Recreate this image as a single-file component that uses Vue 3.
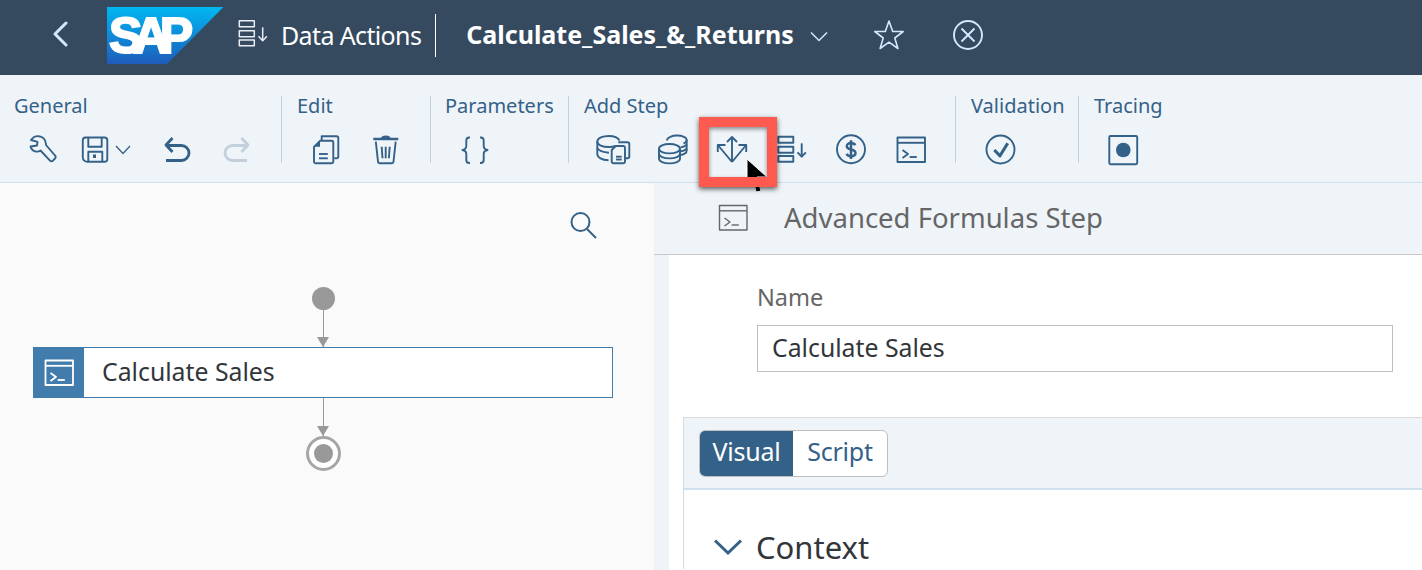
<script setup>
import { h } from 'vue'

/* '!' = heavier stroke, '#' = solid fill */
const icons = {
  wrench: ['M3 5C5 2.200 8 1 10.500 1.200C14.500 1.500 17.800 4.500 18 9L18 10L27 20.500A2 2 0 0 1 27 23.500L25 25.700A2 2 0 0 1 22 25.700L12.500 15.500C9.500 17.500 4 17 2.500 11.500L9 10.500L9.500 6.800Z'],
  save: ['M5.500 2.500H24.500A2.800 2.800 0 0 1 27.300 5.300V24A2.800 2.800 0 0 1 24.500 26.800H7.500A4.500 4.500 0 0 1 2.800 22.500V5.300A2.800 2.800 0 0 1 5.500 2.500Z', 'M8.300 2.500V11.700H21.700V2.500', 'M8.300 26.800V16.700H22.300V26.800', '#M13 19.500H16V23H13Z'],
  copy: ['M10.700 5V1.200H25.500A1.800 1.800 0 0 1 27.300 3V21.500A1.800 1.800 0 0 1 25.500 23.300H23.300', 'M9 5.800H20.500A1.800 1.800 0 0 1 22.300 7.600V26.500A1.800 1.800 0 0 1 20.500 28.300H4.800A1.800 1.800 0 0 1 3 26.500V11.800Z', '#M9 5.800V11.800H3Z', 'M8 19H16.800', 'M8 23.300H16.800'],
  trash: ['!M2.300 4H27.300', '#M10 3.200C10 1.500 12 .4 14.800 .4S19.500 1.500 19.500 3.200Z', 'M4.800 6.700L7 26.500A2 2 0 0 0 9 28.300H20.500A2 2 0 0 0 22.500 26.500L24.700 6.700', 'M10.700 11.700L11.500 23.300', 'M14.700 11.700V23.300', 'M18.700 11.700L17.900 23.300'],
  braces: ['M10 2.500H9.300C7.300 2.500 6.300 3.500 6.300 5.500V11C6.300 13 5 14.500 2.500 15C5 15.500 6.300 17 6.300 19V25C6.300 27 7.300 28 9.300 28H10', 'M20 2.500H20.700C22.700 2.500 23.700 3.500 23.700 5.500V11C23.700 13 25 14.500 27.500 15C25 15.500 23.700 17 23.700 19V25C23.700 27 22.700 28 20.700 28H20'],
  dbdoc: ['M21.500 5.500C20 2.800 15.500 1 11 1C4.800 1 -.7 3 -.7 6.500V19C-.7 22.500 4 25 10.500 25.300', 'M-.7 6.500C-.7 10 4.500 12 11 12C13.500 12 15.800 11.700 17.500 11', 'M-.7 13C0 15.500 5 17.500 11 17.700', 'M20.300 7.300H29.500A1.800 1.800 0 0 1 31.300 9.100V21.500A1.800 1.800 0 0 1 29.500 23.300H27.700', 'M17.700 11H25.200A1.800 1.800 0 0 1 27 12.800V26.500A1.800 1.800 0 0 1 25.200 28.300H15.500A1.800 1.800 0 0 1 13.700 26.500V15Z', 'M18 21.700H23.700', 'M18 24.500H23.700'],
  dbstack: ['M12.500 9C6.700 9 2 11 2 13.700S6.700 18.400 12.500 18.400 23 16.400 23 13.700 18.300 9 12.500 9Z', 'M2 13.700V23.700C2 26.400 6.700 28.400 12.500 28.400S23 26.400 23 23.700V13.700', 'M2 18.700C2 21.400 6.700 23.400 12.500 23.400S23 21.400 23 18.700', 'M9.700 5.500C10.500 2.500 15 .5 20 .5 25.500 .5 29.700 2.400 29.700 5V15.500C29.700 17.800 27 19.500 23.500 20', 'M26.500 8.500C28.300 7.800 29.700 6.500 29.700 5', 'M23.700 12.300C26.700 11.800 29 10.800 29.700 9.500', 'M23.700 16.300C26.700 15.800 29 14.800 29.700 13.500'],
  split: ['M15 2V27', 'M10 7L15 2 20 7', 'M15 27L.8 10', 'M15 27L29.200 10', 'M.8 17V10H8.500', 'M21.500 10H29.200V17'],
  rows: ['M1.300 1.700H16.300V7.700H1.300Z', 'M1.300 11.700H16.300V17.700H1.300Z', 'M1.300 21H16.300V26.700H1.300Z', 'M24.700 8.300V21.700', 'M20.500 17.300L24.700 21.700 28.900 17.300'],
  dollar: ['M15 .3A14 14 0 1 1 15 28.300 14 14 0 1 1 15 .3Z', '!M19.300 10.200C18.500 8.700 17 8 15 8C12.500 8 10.800 9.300 10.800 11.200C10.800 15.800 19.500 13.200 19.500 18C19.500 20 17.500 21.200 15 21.200C13 21.200 11.300 20.300 10.500 18.800', '!M15 5.200V24'],
  console: ['M1.500 2.500H29V27H1.500Z', 'M1.500 7.800H29', 'M6.500 15L12 19 6.500 23', 'M13.600 22H20.800'],
  check: ['M15.500 .5A14 14 0 1 1 15.500 28.500 14 14 0 1 1 15.500 .5Z', '!!M9.300 15L15 20.800 22.700 8.300'],
  record: ['M2.500 1H28A1.200 1.200 0 0 1 29.200 2.200V28A1.200 1.200 0 0 1 28 29.200H2.500A1.200 1.200 0 0 1 1.300 28V2.200A1.200 1.200 0 0 1 2.500 1Z'],
  undo: ['M10.500 3L4 10 10.500 17', 'M4 10.500H19.500A7.500 7.500 0 0 1 19.500 25.500H4'],
  redo: ['M19.500 3L26 10 19.500 17', 'M26 10.500H10.500A7.500 7.500 0 0 0 10.500 25.500H25'],
  search: ['M11.500 2A9 9 0 1 1 11.500 20 9 9 0 1 1 11.500 2Z', 'M18 18L27 27'],
  star: ['M15 1L18.700 11.500H29.200L20.800 18 23.900 28.500 15 22.200 6.100 28.500 9.200 18 .8 11.500H11.300Z'],
  xcircle: ['M15 1A14 14 0 1 1 15 29 14 14 0 1 1 15 1Z', 'M8.500 8.500L21.500 21.500', 'M21.500 8.500L8.500 21.500'],
}

const Ico = (props) => {
  const sw = Number(props.sw || 1.9)
  return h('svg', {
    width: props.size || 30,
    height: props.size || 30,
    viewBox: '0 0 30 30',
    fill: 'none',
    stroke: 'currentColor',
    'stroke-width': sw,
    'stroke-linejoin': 'round',
    style: 'display:block;flex:none;overflow:visible',
  }, [
    ...icons[props.name].map((raw) => {
      if (raw.startsWith('#')) return h('path', { d: raw.slice(1), fill: 'currentColor', stroke: 'none' })
      if (raw.startsWith('!!')) return h('path', { d: raw.slice(2), 'stroke-width': sw + 1.2 })
      if (raw.startsWith('!')) return h('path', { d: raw.slice(1), 'stroke-width': sw + 0.6 })
      return h('path', { d: raw })
    }),
    props.name === 'record' ? h('circle', { cx: 15.300, cy: 15, r: 7.300, fill: 'currentColor', stroke: 'none' }) : null,
  ])
}
Ico.props = ['name', 'size', 'sw']

const groups = [
  { id: 'general', label: 'General', tools: ['wrench', 'save', 'undo', 'redo'] },
  { id: 'edit', label: 'Edit', tools: ['copy', 'trash'] },
  { id: 'params', label: 'Parameters', tools: ['braces'] },
  { id: 'add', label: 'Add Step', tools: ['dbdoc', 'dbstack', 'split', 'rows', 'dollar', 'console'] },
  { id: 'valid', label: 'Validation', tools: ['check'] },
  { id: 'trace', label: 'Tracing', tools: ['record'] },
]
</script>

<template>
  <div class="page">
    <header class="shell">
      <svg class="back" width="16" height="26" viewBox="0 0 16 26" fill="none" stroke="currentColor" stroke-width="3" stroke-linecap="round" stroke-linejoin="round"><path d="M14 2L3 13 14 24"/></svg>
      <svg class="logo" width="117" height="57" viewBox="0 0 117 57">
        <defs>
          <linearGradient id="sapg" x1="0" y1="0" x2="0" y2="1">
            <stop offset="0" stop-color="#00b8f1"/>
            <stop offset="0.45" stop-color="#0d8fdc"/>
            <stop offset="1" stop-color="#1e5cb9"/>
          </linearGradient>
        </defs>
        <path d="M0 0H116.500L60 57H0Z" fill="url(#sapg)"/>
        <text x="2" y="45.500" font-family="'Liberation Sans',sans-serif" font-weight="700" font-size="50" fill="#fff" stroke="#fff" stroke-width="2" textLength="84" lengthAdjust="spacing">SAP</text>
      </svg>
      <Ico class="app-ico" name="rows" :sw="1.500" />
      <span class="app">Data Actions</span>
      <span class="bar"></span>
      <span class="doc">Calculate_Sales_&amp;_Returns</span>
      <svg class="caret" width="18" height="11" viewBox="0 0 18 11" fill="none" stroke="currentColor" stroke-width="1.500"><path d="M1 1.500L9 9.500 17 1.500"/></svg>
      <Ico class="star" name="star" :sw="1.600" />
      <Ico class="close" name="xcircle" :sw="1.900" />
    </header>

    <nav class="toolbar">
      <section v-for="g in groups" :key="g.id" class="group" :class="'g-' + g.id">
        <div class="label">{{ g.label }}</div>
        <div class="tools">
          <button v-for="t in g.tools" :key="t" class="tool" :class="'t-' + t">
            <Ico :name="t" :sw="t === 'undo' || t === 'redo' ? 2.800 : 1.900" />
            <svg v-if="t === 'save'" class="save-caret" width="16" height="10" viewBox="0 0 16 10" fill="none" stroke="currentColor" stroke-width="1.300"><path d="M1 1L8 8.500 15 1"/></svg>
          </button>
        </div>
      </section>
      <div class="pointer">
        <svg width="24" height="38" viewBox="0 0 24 38"><path d="M1 1V26L7 20 10 34 15 33 11 19H21Z" fill="#000" stroke="#fff" stroke-width="1"/></svg>
      </div>
      <div class="callout"></div>
    </nav>

    <main class="work">
      <aside class="canvas">
        <div class="search"><Ico name="search" :sw="2" /></div>
        <div class="flow">
          <div class="start"></div>
          <div class="wire short"></div>
          <div class="node">
            <div class="node-ico"><Ico name="console" :sw="1.800" /></div>
            <div class="node-name">Calculate Sales</div>
          </div>
          <div class="wire long"></div>
          <div class="end"><span></span></div>
        </div>
      </aside>

      <section class="panel">
        <div class="panel-head">
          <Ico class="panel-ico" name="console" :sw="1.400" />
          <h2>Advanced Formulas Step</h2>
        </div>
        <div class="panel-body">
          <div class="form">
            <label>Name</label>
            <div class="input">Calculate Sales</div>
          </div>
          <div class="card">
            <div class="card-bar">
              <div class="segment">
                <span class="seg on">Visual</span>
                <span class="seg">Script</span>
              </div>
            </div>
            <div class="context">
              <svg width="30" height="18" viewBox="0 0 30 18" fill="none" stroke="currentColor" stroke-width="3"><path d="M2 2.500L15 15 28 2.500"/></svg>
              <span>Context</span>
            </div>
          </div>
        </div>
      </section>
    </main>
  </div>
</template>

<style>
html, body { margin: 0; overflow: hidden; }
</style>

<style scoped>
.page {
  width: 1422px;
  height: 570px;
  overflow: hidden;
  font-family: "Noto Sans", "Open Sans", sans-serif;
  background: #fff;
}
.shell {
  height: 75px;
  background: #354a5f;
  color: #fff;
  display: flex;
  align-items: center;
  box-sizing: border-box;
  padding-left: 52px;
}
.back { color: #d1e8ff; margin-right: 39px; margin-top: -7px; }
.logo { margin-right: 14px; margin-top: -4px; flex: none; }
.app-ico { color: #e8eef4; margin-right: 13px; margin-top: -8px; }
.app { font-size: 25px; letter-spacing: -0.630px; margin-top: -6px; }
.bar { width: 1px; height: 43px; background: #fff; margin: -5px 30px 0 14px; }
.doc { font-size: 25px; font-weight: 700; margin-top: -8px; }
.caret { color: #d1e8ff; margin: -3px 46px 0 16px; }
.star { color: #d1e8ff; margin-top: -5px; margin-right: 49px; }
.close { color: #d1e8ff; margin-top: -5px; }

.toolbar {
  position: relative;
  height: 108px;
  box-sizing: border-box;
  background: #eff4f9;
  border-bottom: 1px solid #d1e0ee;
  display: flex;
  align-items: flex-start;
  padding-top: 21px;
}
.group {
  box-sizing: border-box;
  height: 67px;
  padding-left: 14px;
  border-right: 1px solid #c9d1d8;
  color: #346187;
  flex: none;
}
.g-general { width: 282px; }
.g-edit { width: 149px; }
.g-params { width: 138px; }
.g-add { width: 387px; }
.g-valid { width: 123px; }
.g-trace { border-right: 0; }
.label { font-size: 20px; line-height: 20px; height: 39px; padding-left: 1px; white-space: nowrap; }
.g-general .label, .g-params .label { padding-left: 0; }
.g-general .tools { margin-left: -1px; }
.tools { display: flex; }
.tool {
  width: 60px;
  height: 30px;
  padding: 0;
  border: 0;
  background: none;
  color: inherit;
  display: flex;
  align-items: center;
  justify-content: center;
  flex: none;
}
.g-add .tool { width: 59.600px; }
.t-save { width: 74px; justify-content: flex-start; padding-left: 7px; gap: 5px; }
.t-redo { color: #c3d0dc; }

.callout {
  position: absolute;
  left: 699px;
  top: 42px;
  width: 78px;
  height: 70px;
  box-sizing: border-box;
  border: 10px solid #ff5a4f;
  box-shadow: 0 2px 5px rgba(0, 0, 0, 0.65), inset 0 2px 4px rgba(0, 0, 0, 0.45);
}
.pointer { position: absolute; left: 746px; top: 83px; line-height: 0; }

.work { display: flex; height: 387px; }
.canvas {
  position: relative;
  width: 654px;
  flex: none;
  background: #fafafa;
}
.search { position: absolute; left: 569px; top: 28px; color: #346187; }
.flow {
  display: flex;
  flex-direction: column;
  align-items: center;
  width: 580px;
  margin-left: 33px;
  padding-top: 104px;
}
.start { width: 23px; height: 23px; border-radius: 50%; background: #999; }
.wire {
  position: relative;
  width: 1px;
  background: #999;
}
.wire::after {
  content: "";
  position: absolute;
  left: -6px;
  bottom: 0;
  border-left: 6.500px solid transparent;
  border-right: 6.500px solid transparent;
  border-top: 10px solid #999;
}
.wire.short { height: 37px; }
.wire.long { height: 38px; z-index: 1; }
.node {
  width: 580px;
  height: 51px;
  box-sizing: border-box;
  display: flex;
  background: #fff;
  border: 1px solid #427cac;
}
.node-ico {
  width: 51px;
  margin: -1px 0 -1px -1px;
  background: #427cac;
  color: #fff;
  display: flex;
  align-items: center;
  justify-content: center;
}
.node-name { margin-left: 18px; font-size: 24.800px; line-height: 47px; color: #32363a; }
.end {
  width: 35px;
  height: 35px;
  box-sizing: border-box;
  border: 3px solid #a6a6a6;
  border-radius: 50%;
  display: flex;
  align-items: center;
  justify-content: center;
  background: #fff;
}
.end span { width: 19px; height: 19px; background: #999; border-radius: 50%; }

.panel { flex: 1; background: #eff4f9; display: flex; flex-direction: column; min-width: 0; }
.panel-head {
  height: 72px;
  box-sizing: border-box;
  border-bottom: 1px solid #c8c8c8;
  display: flex;
  align-items: center;
  padding-left: 64px;
  color: #666;
}
.panel-head h2 { margin: -2px 0 0 36px; font-size: 27.500px; font-weight: 400; color: #666; }
.panel-ico { color: #666; margin-top: -1px; }
.panel-body { background: #fff; margin-left: 15px; flex: 1; overflow: hidden; }
.form { padding: 24px 29px 0 88px; }
.form label { display: block; font-size: 23.500px; line-height: 36px; color: #666; }
.input {
  height: 47px;
  box-sizing: border-box;
  margin-top: 10px;
  border: 1px solid #bfbfbf;
  padding-left: 14px;
  font-size: 24.800px;
  line-height: 43px;
  color: #32363a;
}
.card { margin: 45px 0 0 14px; border-left: 1px solid #d9d9d9; border-top: 1px solid #d9d9d9; }
.card-bar {
  height: 72px;
  box-sizing: border-box;
  background: #eff4f9;
  border-bottom: 2px solid #cfe0f0;
  padding: 12px 0 0 15px;
}
.segment {
  display: flex;
  width: 189px;
  height: 47px;
  box-sizing: border-box;
  border: 1px solid #bfbfbf;
  border-radius: 6px;
  overflow: hidden;
  background: #fff;
  font-size: 25px;
  line-height: 41px;
  color: #346187;
}
.seg { flex: 1; text-align: center; letter-spacing: -0.200px; }
.seg.on { flex: none; width: 93px; background: #346187; color: #fff; }
.context {
  display: flex;
  align-items: center;
  padding: 35px 0 0 29px;
  font-size: 31px;
  line-height: 44px;
  color: #32363a;
}
.context svg { color: #346187; margin-right: 13px; }
</style>
